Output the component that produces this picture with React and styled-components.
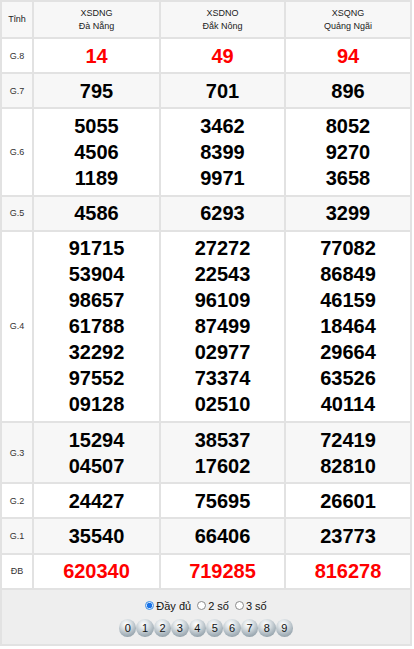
import styled, { createGlobalStyle } from 'styled-components'

const GlobalStyle = createGlobalStyle`
  body {
    margin: 0;
    background: #fff;
    font-family: "Liberation Sans", Arial, sans-serif;
  }
`

const provinces = [
  { code: 'XSDNG', name: 'Đà Nẵng' },
  { code: 'XSDNO', name: 'Đắk Nông' },
  { code: 'XSQNG', name: 'Quảng Ngãi' },
]

const prizes = [
  { label: 'G.8', red: true, values: [['14'], ['49'], ['94']] },
  { label: 'G.7', values: [['795'], ['701'], ['896']] },
  { label: 'G.6', values: [['5055', '4506', '1189'], ['3462', '8399', '9971'], ['8052', '9270', '3658']] },
  { label: 'G.5', values: [['4586'], ['6293'], ['3299']] },
  {
    label: 'G.4',
    values: [
      ['91715', '53904', '98657', '61788', '32292', '97552', '09128'],
      ['27272', '22543', '96109', '87499', '02977', '73374', '02510'],
      ['77082', '86849', '46159', '18464', '29664', '63526', '40114'],
    ],
  },
  { label: 'G.3', values: [['15294', '04507'], ['38537', '17602'], ['72419', '82810']] },
  { label: 'G.2', values: [['24427'], ['75695'], ['26601']] },
  { label: 'G.1', values: [['35540'], ['66406'], ['23773']] },
  { label: 'ĐB', red: true, values: [['620340'], ['719285'], ['816278']] },
]

const Table = styled.div`
  width: 412px;
  border-top: 2px solid #e2e2e2;
  border-left: 2px solid #e2e2e2;
  box-sizing: border-box;
`

const Row = styled.div`
  display: grid;
  grid-template-columns: 32px 127px 125px 126px;
  background: ${(p) => (p.$shaded ? '#f7f7f7' : '#fff')};
`

const Cell = styled.div`
  display: flex;
  flex-direction: column;
  align-items: center;
  justify-content: center;
  border-right: 2px solid #e2e2e2;
  border-bottom: 2px solid #e2e2e2;
`

const HeadCell = styled(Cell)`
  height: 35px;
  font-size: 9px;
  line-height: 13px;
  color: #222;
  text-align: center;
`

const LabelCell = styled(Cell)`
  font-size: 9px;
  color: #333;
`

const NumberCell = styled(Cell)`
  padding: 3.6px 0;
  font-size: 20px;
  font-weight: bold;
  line-height: 26px;
  color: ${(p) => (p.$red ? '#ff0000' : '#000')};
`

const Footer = styled.div`
  display: flex;
  flex-direction: column;
  align-items: center;
  gap: 7px;
  height: 56px;
  padding-top: 10px;
  box-sizing: border-box;
  background: #eeeeee;
  border-right: 2px solid #e2e2e2;
  border-bottom: 2px solid #e2e2e2;
`

const Options = styled.div`
  display: flex;
  align-items: center;
  gap: 6px;
  font-size: 11px;
  color: #111;
`

const Option = styled.label`
  display: flex;
  align-items: center;
  gap: 2px;
`

const Radio = styled.span`
  width: 9px;
  height: 9px;
  border-radius: 50%;
  box-sizing: border-box;
  border: 1px solid ${(p) => (p.$checked ? '#3d8fe6' : '#8a8a8a')};
  background: ${(p) =>
    p.$checked ? 'radial-gradient(circle, #1a73e8 0 2.5px, #d7e8fb 3px)' : '#fff'};
`

const Balls = styled.div`
  display: flex;
`

const Ball = styled.span`
  width: 17.4px;
  height: 18px;
  border-radius: 50%;
  display: flex;
  align-items: center;
  justify-content: center;
  font-size: 11px;
  color: #111;
  background: radial-gradient(circle at 42% 30%, #ffffff 0%, #e3e8eb 25%, #a7b3bb 65%, #7d8c96 100%);
`

export default function App() {
  return (
    <>
      <GlobalStyle />
      <Table>
        <Row $shaded>
          <HeadCell>Tỉnh</HeadCell>
          {provinces.map((p) => (
            <HeadCell key={p.code}>
              <span>{p.code}</span>
              <span>{p.name}</span>
            </HeadCell>
          ))}
        </Row>
        {prizes.map((prize, i) => (
          <Row key={prize.label} $shaded={i % 2 === 1}>
            <LabelCell>{prize.label}</LabelCell>
            {prize.values.map((nums, j) => (
              <NumberCell key={j} $red={prize.red}>
                {nums.map((n) => (
                  <span key={n}>{n}</span>
                ))}
              </NumberCell>
            ))}
          </Row>
        ))}
        <Footer>
          <Options>
            <Option><Radio $checked />Đầy đủ</Option>
            <Option><Radio />2 số</Option>
            <Option><Radio />3 số</Option>
          </Options>
          <Balls>
            {[0, 1, 2, 3, 4, 5, 6, 7, 8, 9].map((n) => (
              <Ball key={n}>{n}</Ball>
            ))}
          </Balls>
        </Footer>
      </Table>
    </>
  )
}
